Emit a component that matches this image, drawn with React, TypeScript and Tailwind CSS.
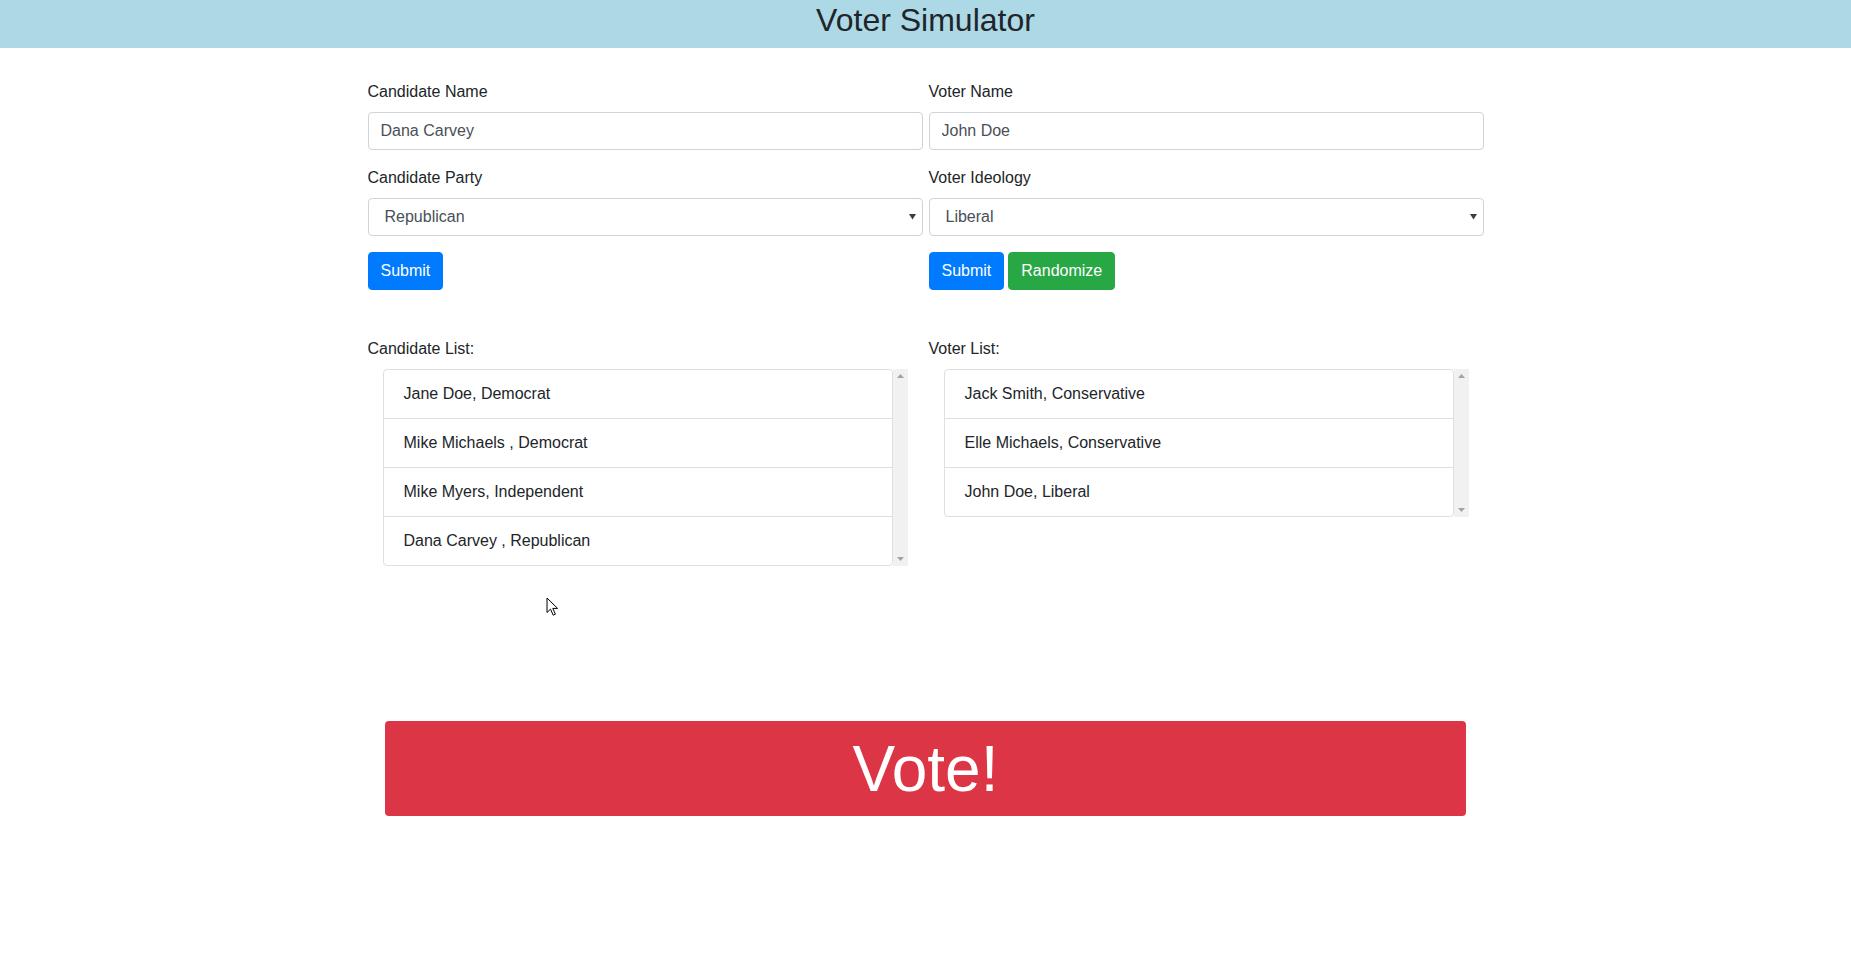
import React from 'react';

const font = { fontFamily: '"Liberation Sans", Arial, sans-serif' };

const candidates = [
    'Jane Doe, Democrat',
    'Mike Michaels , Democrat',
    'Mike Myers, Independent',
    'Dana Carvey , Republican',
];

const voters = ['Jack Smith, Conservative', 'Elle Michaels, Conservative', 'John Doe, Liberal'];

const inputCls =
    'block w-full h-[38px] px-3 text-base text-[#495057] bg-white border border-[#ced4da] rounded outline-none';

const Field = ({ label, children }: { label: string; children: React.ReactNode }) => (
    <div className="mb-4">
        <label className="block mb-2 leading-6 text-[#212529]">{label}</label>
        {children}
    </div>
);

const Select = ({ value, options }: { value: string; options: string[] }) => (
    <div className="relative">
        <select
            className="block w-full h-[38px] pl-4 pr-8 text-base text-[#495057] bg-white border border-[#ced4da] rounded outline-none appearance-none"
            defaultValue={value}
        >
            {options.map((o) => (
                <option key={o}>{o}</option>
            ))}
        </select>
        <svg className="absolute right-[7px] top-[16px] pointer-events-none" width="7" height="6" viewBox="0 0 7 6">
            <path d="M0 0 L7 0 L3.5 5.5 Z" fill="#3c3c3c" />
        </svg>
    </div>
);

const Btn = ({ color, children }: { color: string; children: React.ReactNode }) => (
    <button type="button" className={`h-[38px] px-3 rounded text-white text-base leading-6 border ${color}`}>
        {children}
    </button>
);

// classic scrollbar track with arrow buttons, no thumb (content fits)
const Track = () => (
    <div className="w-[15px] shrink-0 bg-[#f1f1f1] flex flex-col justify-between items-center py-[5px]">
        <svg width="7" height="4" viewBox="0 0 7 4">
            <path d="M0 4 L3.5 0 L7 4 Z" fill="#a3a3a3" />
        </svg>
        <svg width="7" height="4" viewBox="0 0 7 4">
            <path d="M0 0 L7 0 L3.5 4 Z" fill="#a3a3a3" />
        </svg>
    </div>
);

const List = ({ title, items }: { title: string; items: string[] }) => (
    <div>
        <div className="mb-2 leading-6 text-[#212529]">{title}</div>
        <div className="px-[15px]">
            <div className="flex">
                <ul className="flex-1 border border-[#dfdfdf] rounded">
                    {items.map((t, i) => (
                        <li
                            key={t}
                            className={`px-5 py-3 leading-6 text-[#212529] ${i > 0 ? 'border-t border-[#dfdfdf]' : ''}`}
                        >
                            {t}
                        </li>
                    ))}
                </ul>
                <Track />
            </div>
        </div>
    </div>
);

export default function App() {
    return (
        <div className="relative min-h-screen bg-white text-base" style={font}>
            <header className="h-12 bg-[#add8e6] text-center">
                <h2 className="text-[32px] leading-[40px] text-[#212529]">Voter Simulator</h2>
            </header>

            <div className="w-[1116px] mx-auto pt-[32px]">
                <div className="grid grid-cols-2 gap-[6px]">
                    <div>
                        <Field label="Candidate Name">
                            <input className={inputCls} defaultValue="Dana Carvey" />
                        </Field>
                        <Field label="Candidate Party">
                            <Select value="Republican" options={['Democrat', 'Republican', 'Independent']} />
                        </Field>
                        <Btn color="bg-[#007bff] border-[#007bff]">Submit</Btn>
                    </div>
                    <div>
                        <Field label="Voter Name">
                            <input className={inputCls} defaultValue="John Doe" />
                        </Field>
                        <Field label="Voter Ideology">
                            <Select value="Liberal" options={['Liberal', 'Moderate', 'Conservative']} />
                        </Field>
                        <div className="flex gap-1">
                            <Btn color="bg-[#007bff] border-[#007bff]">Submit</Btn>
                            <Btn color="bg-[#28a745] border-[#28a745]">Randomize</Btn>
                        </div>
                    </div>
                </div>

                <div className="grid grid-cols-2 gap-[6px] mt-[47px] items-start">
                    <List title="Candidate List:" items={candidates} />
                    <List title="Voter List:" items={voters} />
                </div>

                <button
                    type="button"
                    className="block w-[1081px] h-[95px] mx-auto mt-[155px] bg-[#dc3545] rounded text-white text-[64px] leading-none"
                >
                    Vote!
                </button>
            </div>

            <svg className="absolute left-[546px] top-[597px]" width="14" height="20" viewBox="0 0 14 20">
                <path
                    d="M1 1 L1 15.5 L4.5 12.2 L7.2 18.2 L9.4 17.2 L6.8 11.4 L11.6 11.4 Z"
                    fill="#fff"
                    stroke="#000"
                    strokeWidth="1"
                    strokeLinejoin="round"
                />
            </svg>
        </div>
    );
}
